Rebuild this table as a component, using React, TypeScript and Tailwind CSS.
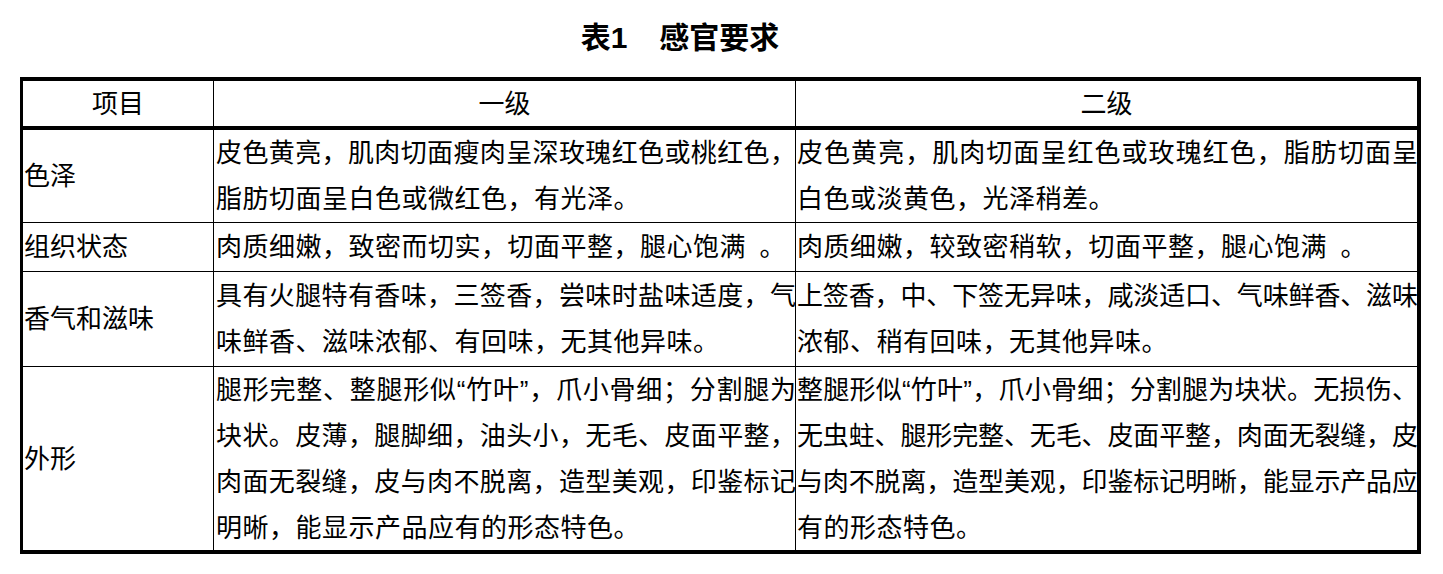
const rows = [
  {
    label: "色泽",
    h: "h-[92px]",
    border: false,
    a: ["皮色黄亮，肌肉切面瘦肉呈深玫瑰红色或桃红色，", "脂肪切面呈白色或微红色，有光泽。"],
    b: ["皮色黄亮，肌肉切面呈红色或玫瑰红色，脂肪切面呈", "白色或淡黄色，光泽稍差。"],
  },
  {
    label: "组织状态",
    h: "h-[49px]",
    border: true,
    a: ["肉质细嫩，致密而切实，切面平整，腿心饱满\u2002。"],
    b: ["肉质细嫩，较致密稍软，切面平整，腿心饱满\u2002。"],
  },
  {
    label: "香气和滋味",
    h: "h-[95px]",
    border: true,
    a: ["具有火腿特有香味，三签香，尝味时盐味适度，气", "味鲜香、滋味浓郁、有回味，无其他异味。"],
    b: ["上签香，中、下签无异味，咸淡适口、气味鲜香、滋味", "浓郁、稍有回味，无其他异味。"],
  },
  {
    label: "外形",
    h: "h-[184px]",
    border: true,
    a: [
      "腿形完整、整腿形似“竹叶”，爪小骨细；分割腿为",
      "块状。皮薄，腿脚细，油头小，无毛、皮面平整，",
      "肉面无裂缝，皮与肉不脱离，造型美观，印鉴标记",
      "明晰，能显示产品应有的形态特色。",
    ],
    b: [
      "整腿形似“竹叶”，爪小骨细；分割腿为块状。无损伤、",
      "无虫蛀、腿形完整、无毛、皮面平整，肉面无裂缝，皮",
      "与肉不脱离，造型美观，印鉴标记明晰，能显示产品应",
      "有的形态特色。",
    ],
  },
];

// every line but the last one is stretched edge to edge, like the Word table
const Lines = ({ lines }: { lines: string[] }) => (
  <div className="w-full">
    {lines.map((line, i) =>
      i < lines.length - 1 ? (
        <div key={i} className="text-justify [text-align-last:justify] tracking-[-1px]">
          {line}
        </div>
      ) : (
        <div key={i} className="whitespace-pre tracking-[0.5px]">
          {line}
        </div>
      )
    )}
  </div>
);

export default function App() {
  return (
    <div className="min-h-screen bg-white text-black font-['Liberation_Sans','Noto_Sans_CJK_SC',sans-serif]">
      <div className="flex h-[77px] items-center justify-center pr-[83px] pb-[2px]">
        <h1 className="flex text-[30px] font-bold leading-none">
          <span>表1</span>
          <span className="ml-[32px]">感官要求</span>
        </h1>
      </div>

      <div className="ml-[20px] w-[1401px] border-4 border-l-[3px] border-black text-[26px] leading-[46px]">
        {/* header */}
        <div className="grid h-[49px] grid-cols-[190px_582px_622px] border-b-4 border-black">
          <div className="flex items-center justify-center">项目</div>
          <div className="flex items-center justify-center border-l border-black">一级</div>
          <div className="flex items-center justify-center border-l border-black">二级</div>
        </div>

        {rows.map((r) => (
          <div
            key={r.label}
            className={`grid grid-cols-[190px_582px_622px] ${r.h} ${r.border ? "border-t border-black" : ""}`}
          >
            <div className="flex items-center pl-[1px]">{r.label}</div>
            <div className="flex items-center border-l border-black pl-[2px]">
              <Lines lines={r.a} />
            </div>
            <div className="flex items-center border-l border-black pl-[1px]">
              <Lines lines={r.b} />
            </div>
          </div>
        ))}
      </div>
    </div>
  );
}
